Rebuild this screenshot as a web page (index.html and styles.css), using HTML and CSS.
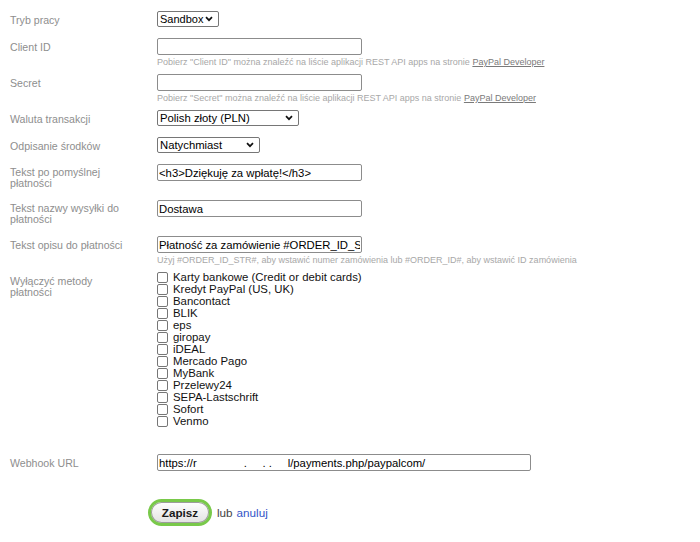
FILE: index.html
```
<!DOCTYPE html>
<html lang="pl">
<head>
<meta charset="utf-8">
<title>PayPal</title>
<link rel="stylesheet" href="styles.css">
</head>
<body>
<form class="form">
  <div class="row">
    <div class="label">Tryb pracy</div>
    <div class="field">
      <span class="sel-wrap">
        <select class="sel sel-mode"><option>Sandbox</option></select>
        <svg class="chev" width="8" height="6" viewBox="0 0 8 6"><polyline points="1,1.2 4,4.2 7,1.2" fill="none" stroke="#111" stroke-width="1.7"/></svg>
      </span>
    </div>
  </div>
  <div class="row">
    <div class="label">Client ID</div>
    <div class="field">
      <input class="txt" type="text">
      <div class="hint">Pobierz "Client ID" można znaleźć na liście aplikacji REST API apps na stronie <a class="hint-link">PayPal Developer</a></div>
    </div>
  </div>
  <div class="row after-hint">
    <div class="label">Secret</div>
    <div class="field">
      <input class="txt" type="text">
      <div class="hint">Pobierz "Secret" można znaleźć na liście aplikacji REST API apps na stronie <a class="hint-link">PayPal Developer</a></div>
    </div>
  </div>
  <div class="row after-hint">
    <div class="label">Waluta transakcji</div>
    <div class="field">
      <span class="sel-wrap">
        <select class="sel sel-currency"><option>Polish złoty (PLN)</option></select>
        <svg class="chev" width="8" height="6" viewBox="0 0 8 6"><polyline points="1,1.2 4,4.2 7,1.2" fill="none" stroke="#111" stroke-width="1.7"/></svg>
      </span>
    </div>
  </div>
  <div class="row">
    <div class="label">Odpisanie środków</div>
    <div class="field">
      <span class="sel-wrap">
        <select class="sel sel-capture"><option>Natychmiast</option></select>
        <svg class="chev" width="8" height="6" viewBox="0 0 8 6"><polyline points="1,1.2 4,4.2 7,1.2" fill="none" stroke="#111" stroke-width="1.7"/></svg>
      </span>
    </div>
  </div>
  <div class="row">
    <div class="label two">Tekst po pomyślnej płatności</div>
    <div class="field"><input class="txt" type="text" value="<h3>Dziękuję za wpłatę!</h3>"></div>
  </div>
  <div class="row">
    <div class="label two">Tekst nazwy wysyłki do płatności</div>
    <div class="field"><input class="txt" type="text" value="Dostawa"></div>
  </div>
  <div class="row">
    <div class="label">Tekst opisu do płatności</div>
    <div class="field">
      <input class="txt" type="text" value="Płatność za zamówienie #ORDER_ID_STR#">
      <div class="hint">Użyj #ORDER_ID_STR#, aby wstawić numer zamówienia lub #ORDER_ID#, aby wstawić ID zamówienia</div>
    </div>
  </div>
  <div class="row row-checks">
    <div class="label two">Wyłączyć metody płatności</div>
    <div class="field checks">
      <label class="check"><input type="checkbox" class="cb"><span>Karty bankowe (Credit or debit cards)</span></label>
      <label class="check"><input type="checkbox" class="cb"><span>Kredyt PayPal (US, UK)</span></label>
      <label class="check"><input type="checkbox" class="cb"><span>Bancontact</span></label>
      <label class="check"><input type="checkbox" class="cb"><span>BLIK</span></label>
      <label class="check"><input type="checkbox" class="cb"><span>eps</span></label>
      <label class="check"><input type="checkbox" class="cb"><span>giropay</span></label>
      <label class="check"><input type="checkbox" class="cb"><span>iDEAL</span></label>
      <label class="check"><input type="checkbox" class="cb"><span>Mercado Pago</span></label>
      <label class="check"><input type="checkbox" class="cb"><span>MyBank</span></label>
      <label class="check"><input type="checkbox" class="cb"><span>Przelewy24</span></label>
      <label class="check"><input type="checkbox" class="cb"><span>SEPA-Lastschrift</span></label>
      <label class="check"><input type="checkbox" class="cb"><span>Sofort</span></label>
      <label class="check"><input type="checkbox" class="cb"><span>Venmo</span></label>
    </div>
  </div>
  <div class="row row-webhook">
    <div class="label">Webhook URL</div>
    <div class="field"><input class="txt txt-wide" type="text" value="https://r               .     . .     l/payments.php/paypalcom/"></div>
  </div>
  <div class="actions">
    <button type="button" class="btn">Zapisz</button>
    <span class="or">lub</span>
    <a class="cancel">anuluj</a>
  </div>
</form>
</body>
</html>
```

FILE: styles.css
```
html, body {
  margin: 0;
  padding: 0;
  background: #fff;
}

.form {
  display: flex;
  flex-direction: column;
  padding: 0 0 0 10px;
  font-family: "Liberation Sans", Arial, sans-serif;
}

.row {
  display: flex;
  margin-top: 11px;
}

.row.after-hint {
  margin-top: 6px;
}

.row-checks {
  margin-top: 5px;
}

.row-webhook {
  margin-top: 27px;
}

.label {
  width: 147px;
  flex: none;
  box-sizing: border-box;
  padding-top: 4px;
  padding-right: 25px;
  color: #8e8e8e;
  font-size: 10.6px;
  line-height: 11px;
}

.label.two {
  padding-top: 3px;
}

.row-checks .label.two {
  padding-top: 5px;
}

.field {
  display: flex;
  flex-direction: column;
  align-items: flex-start;
}

.txt {
  box-sizing: border-box;
  width: 205px;
  height: 17px;
  margin: 0;
  padding: 0 1px;
  border: 1px solid #8c8c8c;
  border-radius: 2px;
  background: #fff;
  color: #000;
  font-family: "Liberation Sans", Arial, sans-serif;
  font-size: 11.3px;
  line-height: 15px;
  outline: none;
}

.txt-wide {
  width: 374px;
}

.sel-wrap {
  position: relative;
  display: inline-flex;
}

.sel {
  appearance: none;
  -webkit-appearance: none;
  box-sizing: border-box;
  height: 16px;
  margin: 0;
  padding: 0 12px 0 2px;
  border: 1px solid #767676;
  border-radius: 2px;
  background: #fff;
  color: #000;
  font-family: "Liberation Sans", Arial, sans-serif;
  font-size: 11.3px;
  line-height: 14px;
}

.chev {
  position: absolute;
  top: 5px;
  right: 6px;
  pointer-events: none;
}

.sel-mode {
  width: 62px;
  font-size: 11px;
}

.sel-currency {
  width: 142px;
}

.sel-capture {
  width: 103px;
}

.hint {
  margin-top: 1px;
  color: #a8a8a8;
  font-size: 9px;
  line-height: 12px;
  white-space: nowrap;
}

.hint-link {
  color: #7a7a7a;
  text-decoration: underline;
}

.checks {
  display: flex;
  flex-direction: column;
}

.check {
  display: flex;
  align-items: center;
  height: 12px;
  color: #111;
  font-size: 11.4px;
  line-height: 12px;
  white-space: nowrap;
}

.cb {
  appearance: none;
  -webkit-appearance: none;
  box-sizing: border-box;
  width: 11px;
  height: 11px;
  margin: 0 5px 0 0;
  border: 1px solid #767676;
  border-radius: 2px;
  background: #fff;
}

.actions {
  display: flex;
  align-items: center;
  margin-top: 28px;
  padding-left: 138px;
  font-size: 11.7px;
}

.btn {
  box-sizing: border-box;
  width: 64px;
  height: 27px;
  margin: 0;
  padding: 0;
  border: 3px solid #79c94a;
  border-radius: 14px;
  background: linear-gradient(#ffffff, #e2e2e2);
  box-shadow: inset 0 0 0 1px #9c9c9c;
  color: #1a1a1a;
  font-family: "Liberation Sans", Arial, sans-serif;
  font-size: 11.7px;
  font-weight: bold;
}

.or {
  margin-left: 5px;
  color: #444;
}

.cancel {
  margin-left: 4px;
  color: #3355c8;
}
```
